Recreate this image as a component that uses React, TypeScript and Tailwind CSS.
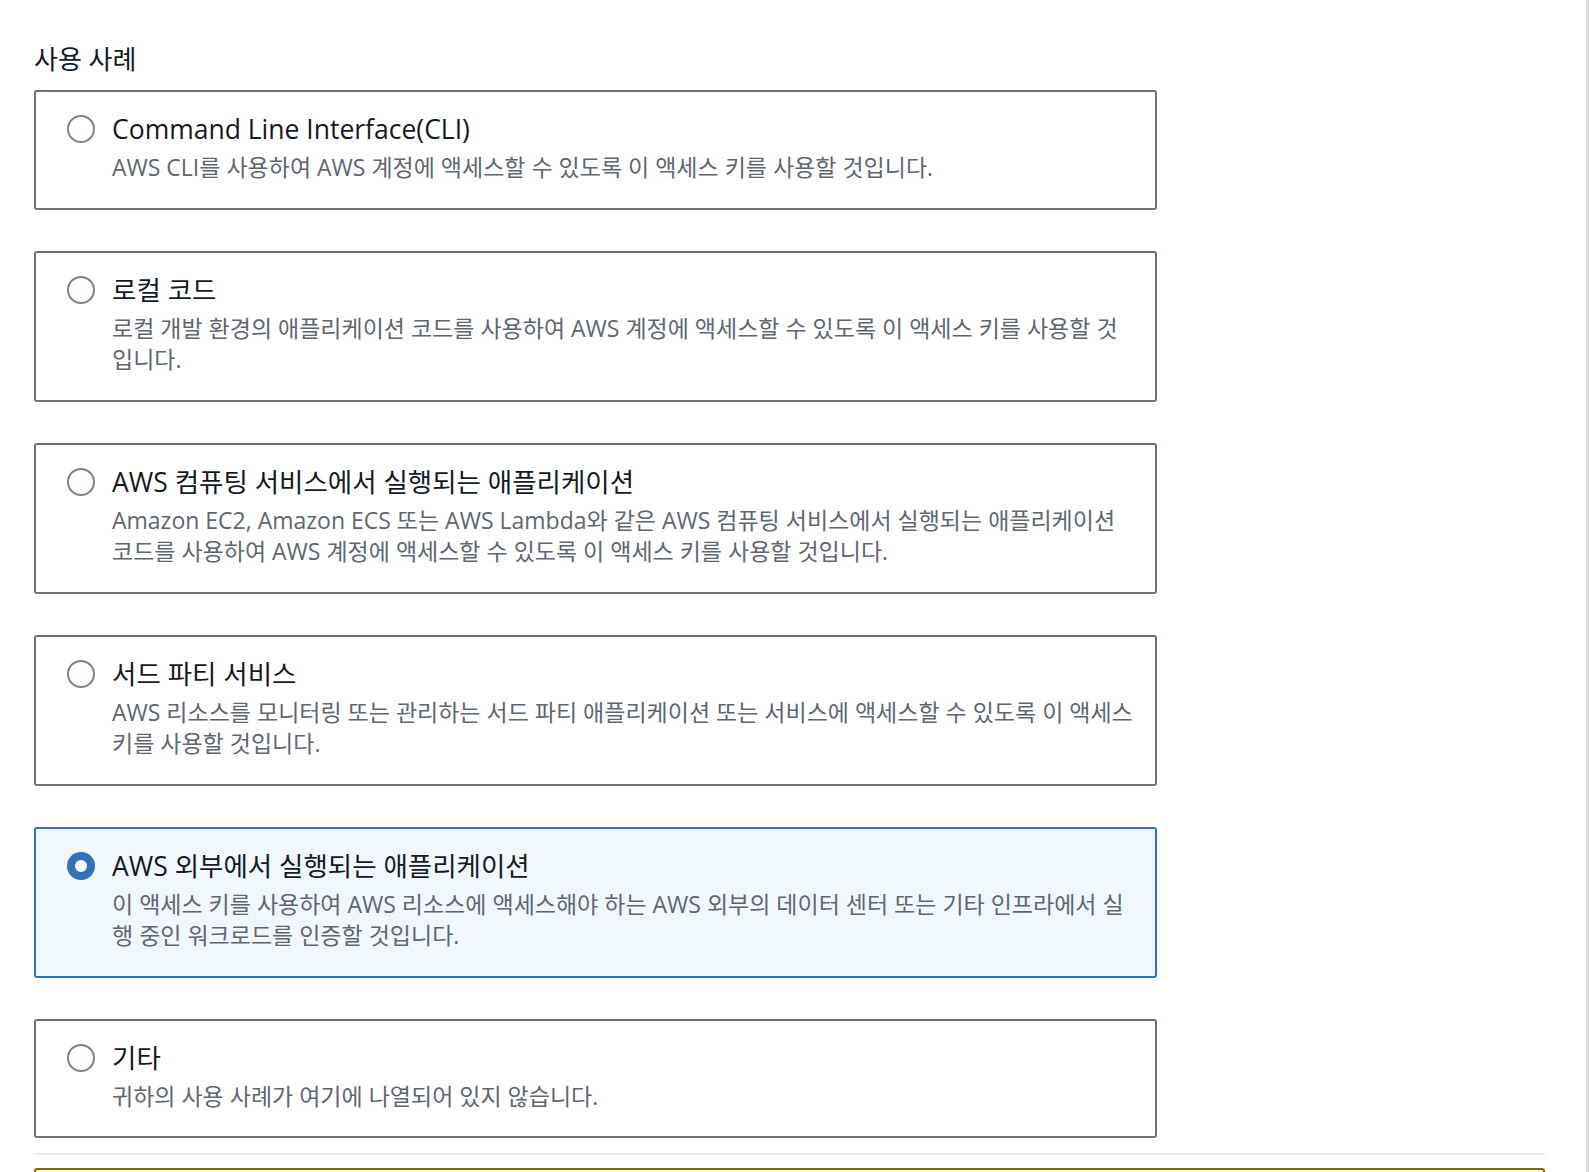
import React, { useState } from "react";

type UseCase = {
  id: string;
  title: string;
  lines: string[];
};

const useCases: UseCase[] = [
  {
    id: "cli",
    title: "Command Line Interface(CLI)",
    lines: ["AWS CLI를 사용하여 AWS 계정에 액세스할 수 있도록 이 액세스 키를 사용할 것입니다."],
  },
  {
    id: "local",
    title: "로컬 코드",
    lines: [
      "로컬 개발 환경의 애플리케이션 코드를 사용하여 AWS 계정에 액세스할 수 있도록 이 액세스 키를 사용할 것",
      "입니다.",
    ],
  },
  {
    id: "compute",
    title: "AWS 컴퓨팅 서비스에서 실행되는 애플리케이션",
    lines: [
      "Amazon EC2, Amazon ECS 또는 AWS Lambda와 같은 AWS 컴퓨팅 서비스에서 실행되는 애플리케이션",
      "코드를 사용하여 AWS 계정에 액세스할 수 있도록 이 액세스 키를 사용할 것입니다.",
    ],
  },
  {
    id: "third-party",
    title: "서드 파티 서비스",
    lines: [
      "AWS 리소스를 모니터링 또는 관리하는 서드 파티 애플리케이션 또는 서비스에 액세스할 수 있도록 이 액세스",
      "키를 사용할 것입니다.",
    ],
  },
  {
    id: "outside",
    title: "AWS 외부에서 실행되는 애플리케이션",
    lines: [
      "이 액세스 키를 사용하여 AWS 리소스에 액세스해야 하는 AWS 외부의 데이터 센터 또는 기타 인프라에서 실",
      "행 중인 워크로드를 인증할 것입니다.",
    ],
  },
  {
    id: "other",
    title: "기타",
    lines: ["귀하의 사용 사례가 여기에 나열되어 있지 않습니다."],
  },
];

const RadioMark: React.FC<{ checked: boolean }> = ({ checked }) => (
  <svg width="28" height="28" viewBox="0 0 28 28" className="shrink-0">
    {checked ? (
      <>
        <circle cx="14" cy="14" r="14" fill="#3173ba" />
        <circle cx="14" cy="14" r="6" fill="#ffffff" />
      </>
    ) : (
      <circle cx="14" cy="14" r="13" fill="#ffffff" stroke="#7d848e" strokeWidth="2" />
    )}
  </svg>
);

const App: React.FC = () => {
  const [selected, setSelected] = useState("outside");

  return (
    <div className="flex min-h-screen bg-white font-['Open_Sans','Noto_Sans_CJK_KR',sans-serif]">
      <main className="flex-1 pl-[34px] pr-[41px] pt-[43px]">
        <h2 className="text-[26px] leading-[32px] font-normal text-[#16191f] mb-[15px]">사용 사례</h2>

        <div className="flex flex-col gap-[41px] w-[1123px]">
          {useCases.map((u) => {
            const checked = selected === u.id;
            return (
              <div
                key={u.id}
                onClick={() => setSelected(u.id)}
                className={`flex items-start gap-[17px] rounded-[3px] border-2 pl-[31px] pr-[30px] pt-[20px] pb-[24px] cursor-pointer ${
                  checked ? "border-[#3173ba] bg-[#f1f8fd]" : "border-[#6b717a] bg-white"
                }`}
              >
                <div className="flex h-[34px] items-center">
                  <RadioMark checked={checked} />
                </div>
                <div className="min-w-0">
                  <div className="text-[26.5px] leading-[34px] text-[#16191f] whitespace-nowrap">{u.title}</div>
                  <div className="mt-[6px] text-[23px] leading-[31.5px] text-[#5f666f]">
                    {u.lines.map((line, i) => (
                      <span key={i} className="block whitespace-nowrap">
                        {line}
                      </span>
                    ))}
                  </div>
                </div>
              </div>
            );
          })}
        </div>

        <div className="mt-[15px] h-[2px] bg-[#eaeded]" />
        <div className="mt-[13px] h-[120px] rounded-[3px] border-2 border-[#8d6605] bg-[#fffce9]" />
      </main>
      <div className="w-[3px] mr-px bg-[#d6dadc]" />
    </div>
  );
};

export default App;
